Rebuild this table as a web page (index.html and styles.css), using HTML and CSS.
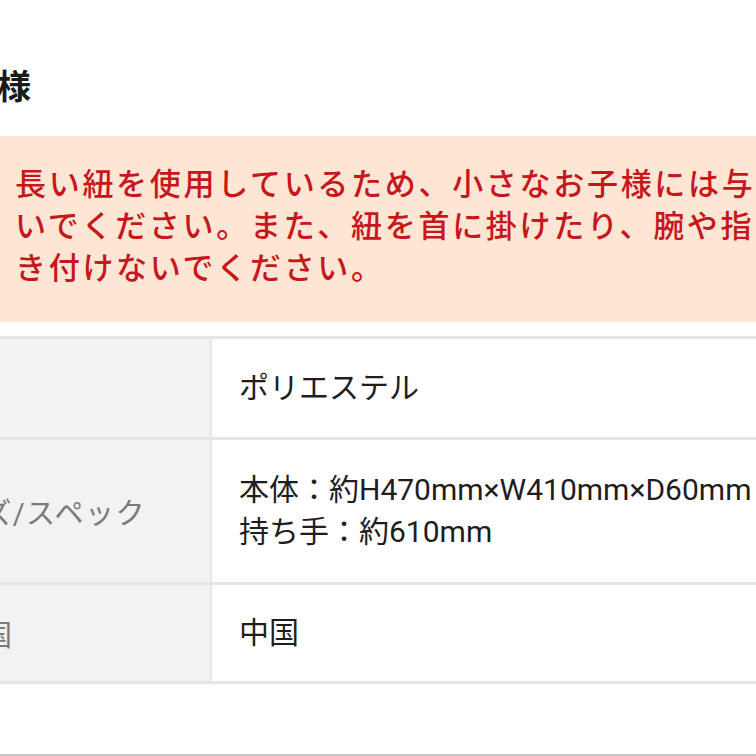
FILE: index.html
```html
<!DOCTYPE html>
<html lang="ja">
<head>
  <meta charset="UTF-8" />
  <title>仕様</title>
  <link rel="stylesheet" href="styles.css">
</head>
<body>
  <section class="spec">
    <h2 class="spec-title">仕様</h2>
    <div class="notice">
      <p>長い紐を使用しているため、小さなお子様には与えないでください。また、紐を首に掛けたり、腕や指に巻き付けないでください。</p>
    </div>
    <table class="spec-table">
      <tr>
        <th>素材</th>
        <td>ポリエステル</td>
      </tr>
      <tr>
        <th>サイズ/スペック</th>
        <td>本体：約H470mm×W410mm×D60mm<br>持ち手：約610mm</td>
      </tr>
      <tr>
        <th>原産国</th>
        <td>中国</td>
      </tr>
    </table>
    <div class="spec-end"></div>
  </section>
</body>
</html>
```

FILE: styles.css
```css
html, body {
  margin: 0;
  overflow: hidden;
  background: #fff;
}
body {
  font-family: Roboto, "Noto Sans CJK JP", sans-serif;
  color: #222;
}
.spec {
  width: 1100px;
  margin-left: -108px;
}
.spec-title {
  margin: 0;
  padding: 65px 0 0 71px;
  height: 71px;
  font-size: 34px;
  line-height: 44px;
  font-weight: 700;
  color: #1a1a1a;
}
.notice {
  background: #fde6d4;
  margin-left: 108px;
  padding: 28px 15px 32px;
}
.notice p {
  margin: 0;
  width: 822px;
  font-size: 31px;
  line-height: 42px;
  letter-spacing: 2.7px;
  font-weight: 500;
  color: #c8161d;
}
.spec-table {
  width: 100%;
  margin-top: 14px;
  border-collapse: collapse;
  border-top: 3px solid #e6e6e6;
}
.spec-table tr {
  border-bottom: 3px solid #e6e6e6;
}
.spec-table th {
  width: 319px;
  box-sizing: border-box;
  padding: 0 0 0 30px;
  text-align: left;
  font-weight: 400;
  font-size: 29px;
  letter-spacing: 1.5px;
  color: #7a7a7a;
  background: #f2f2f2;
  border-right: 2px solid #e8e8e8;
}
.spec-table td {
  padding: 28px 0 28px 27px;
  font-size: 30px;
  line-height: 42px;
  color: #1e1e1e;
}
.spec-table tr:nth-child(2) td {
  padding: 29px 0 29px 27px;
}
.spec-table tr:nth-child(3) td {
  padding: 27px 0 27px 27px;
}
.spec-end {
  margin-top: 70px;
  border-top: 3px solid #c8c8c8;
}
```
